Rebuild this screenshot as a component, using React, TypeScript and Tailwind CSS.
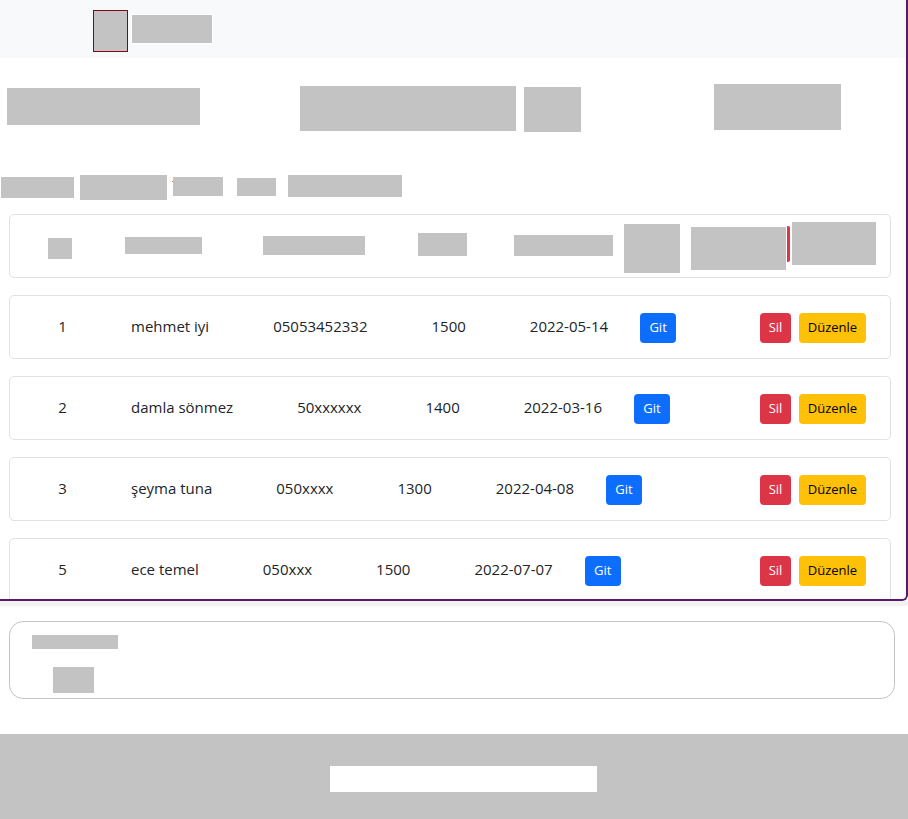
import React from "react";

type Row = { id: string; name: string; phone: string; amount: string; date: string };

const rows: Row[] = [
  { id: "1", name: "mehmet iyi", phone: "05053452332", amount: "1500", date: "2022-05-14" },
  { id: "2", name: "damla sönmez", phone: "50xxxxxx", amount: "1400", date: "2022-03-16" },
  { id: "3", name: "şeyma tuna", phone: "050xxxx", amount: "1300", date: "2022-04-08" },
  { id: "5", name: "ece temel", phone: "050xxx", amount: "1500", date: "2022-07-07" },
];

function DataRow({ r }: { r: Row }) {
  return (
    <div className="mb-[17px] flex h-[64px] items-center rounded-[5px] border border-[#dee2e6] bg-white text-[15px] text-[#212529]">
      <div className="w-[105px] pb-[2px] text-center">{r.id}</div>
      <div className="ml-[16px] pb-[2px]">{r.name}</div>
      <div className="ml-[64px] pb-[2px]">{r.phone}</div>
      <div className="ml-[64px] pb-[2px]">{r.amount}</div>
      <div className="ml-[64px] pb-[2px]">{r.date}</div>
      <button className="ml-[32px] mt-[1px] h-[30px] w-[36px] rounded-[4px] bg-[#0d6efd] text-[13px] text-white">Git</button>
      <div className="ml-auto mr-[24px] mt-[1px] flex gap-[8px]">
        <button className="h-[30px] w-[31px] rounded-[4px] bg-[#dc3545] text-[13px] text-white">Sil</button>
        <button className="h-[30px] w-[67px] rounded-[4px] bg-[#ffc107] text-[13px] text-black">Düzenle</button>
      </div>
    </div>
  );
}

const G = "bg-[#c3c3c3]";

export default function App() {
  return (
    <div className="w-[908px] bg-white" style={{ fontFamily: '"Open Sans", "Noto Sans", sans-serif' }}>
      <div className="h-[601px] overflow-hidden rounded-br-[6px] border-b-2 border-r-2 border-[#5a1a6a]">
        <nav className="flex h-[58px] items-start bg-[#f8f9fa]">
          <div className={`ml-[93px] mt-[10px] h-[42px] w-[35px] border border-[#8a0018] ${G}`} />
          <div className={`ml-[3px] mt-[14px] h-[30px] w-[82px] border border-white ${G}`} />
        </nav>
        <div className="mt-[26px] flex h-[48px] items-start">
          <div className={`ml-[7px] mt-[4px] h-[37px] w-[193px] ${G}`} />
          <div className={`ml-[100px] mt-[2px] h-[45px] w-[216px] ${G}`} />
          <div className={`ml-[8px] mt-[3px] h-[45px] w-[57px] ${G}`} />
          <div className={`ml-[133px] h-[46px] w-[127px] ${G}`} />
        </div>
        <div className="mt-[43px] flex h-[25px] items-start">
          <div className={`ml-[1px] mt-[2px] h-[21px] w-[73px] ${G}`} />
          <div className={`ml-[6px] h-[25px] w-[87px] ${G}`} />
          <div className="ml-[5px] mt-[6px] h-[1px] w-[1px] bg-[#b0704a]" />
          <div className={`mt-[2px] h-[19px] w-[50px] ${G}`} />
          <div className={`ml-[14px] mt-[3px] h-[18px] w-[39px] ${G}`} />
          <div className={`ml-[12px] h-[22px] w-[114px] ${G}`} />
        </div>
        <div className="mt-[14px] pl-[9px] pr-[15px]">
          <div className="mb-[17px] flex h-[64px] items-start rounded-[5px] border border-[#dee2e6] bg-white">
            <div className={`ml-[38px] mt-[23px] h-[21px] w-[24px] ${G}`} />
            <div className={`ml-[53px] mt-[22px] h-[17px] w-[77px] ${G}`} />
            <div className={`ml-[61px] mt-[21px] h-[19px] w-[102px] ${G}`} />
            <div className={`ml-[53px] mt-[18px] h-[23px] w-[49px] ${G}`} />
            <div className={`ml-[47px] mt-[20px] h-[21px] w-[99px] ${G}`} />
            <div className={`ml-[11px] mt-[9px] h-[49px] w-[56px] ${G}`} />
            <div className={`ml-[11px] mt-[12px] h-[43px] w-[95px] ${G}`} />
            <div className="ml-[1px] mt-[11px] h-[36px] w-[3px] rounded-r-[2px] bg-[#dc3545]" />
            <div className={`ml-[2px] mt-[7px] h-[43px] w-[84px] ${G}`} />
          </div>
          {rows.map((r) => (
            <DataRow key={r.id} r={r} />
          ))}
        </div>
      </div>
      <div className="h-[5px] bg-[#f2f2f2]" />
      <div className="mx-[9px] mt-[15px] h-[78px] w-[886px] rounded-[14px] border border-[#c4c4c4] bg-white">
        <div className={`ml-[22px] mt-[13px] h-[14px] w-[86px] ${G}`} />
        <div className={`ml-[43px] mt-[18px] h-[26px] w-[41px] ${G}`} />
      </div>
      <div className={`mt-[35px] flex h-[85px] items-start justify-center ${G}`}>
        <div className="ml-[19px] mt-[32px] h-[26px] w-[267px] bg-white" />
      </div>
    </div>
  );
}
